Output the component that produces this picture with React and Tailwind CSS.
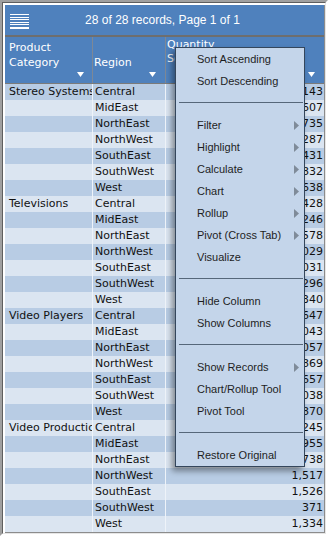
import React from "react";

const regions = ["Central", "MidEast", "NorthEast", "NorthWest", "SouthEast", "SouthWest", "West"];
const groups = [
  { name: "Stereo Systems", vals: ["1,143", "1,607", "1,735", "1,287", "1,431", "1,832", "1,638"] },
  { name: "Televisions", vals: ["1,428", "1,246", "1,578", "2,029", "2,031", "1,296", "1,340"] },
  { name: "Video Players", vals: ["1,647", "2,043", "2,057", "1,869", "1,657", "2,038", "1,870"] },
  { name: "Video Production", vals: ["1,245", "955", "738", "1,517", "1,526", "371", "1,334"] },
];

const rows = [];
groups.forEach((g) =>
  regions.forEach((r, i) => rows.push({ cat: i === 0 ? g.name : "", region: r, val: g.vals[i] }))
);

function Tri() {
  return (
    <svg width="7" height="5" viewBox="0 0 7 5" className="block">
      <polygon points="0,0 7,0 3.5,5" fill="#ffffff" />
    </svg>
  );
}

function Arrow() {
  return (
    <svg width="5" height="9" viewBox="0 0 5 9" className="block">
      <polygon points="0,0 5,4.5 0,9" fill="#7f8b99" />
    </svg>
  );
}

const menu = [
  { t: "Sort Ascending" },
  { t: "Sort Descending" },
  { sep: true },
  { t: "Filter", sub: true },
  { t: "Highlight", sub: true },
  { t: "Calculate", sub: true },
  { t: "Chart", sub: true },
  { t: "Rollup", sub: true },
  { t: "Pivot (Cross Tab)", sub: true },
  { t: "Visualize" },
  { sep: true },
  { t: "Hide Column" },
  { t: "Show Columns" },
  { sep: true },
  { t: "Show Records", sub: true },
  { t: "Chart/Rollup Tool" },
  { t: "Pivot Tool" },
  { sep: true },
  { t: "Restore Original" },
];

export default function App() {
  return (
    <div className="relative w-[328px] h-[536px] overflow-hidden bg-white">
      <div className="w-full h-full border-l-2 border-t-2 border-r-2 border-b-2 border-l-[#a0a0a0] border-t-[#a0a0a0] border-r-white border-b-white">
        <div className="w-full h-full border border-l-[#5f5f5f] border-t-[#5f5f5f] border-r-[#e6e6e6] border-b-[#e6e6e6] pl-[2px] pt-[2px] bg-white">
          <div className="w-[320px] h-[528px] border-r border-b border-[#8c8c8c] flex flex-col overflow-hidden">
            {/* top bar */}
            <div className="h-[32px] shrink-0 bg-[#4f81bd] border-b-2 border-[#6e6e6e] flex items-center relative">
              <div className="pl-[5px] pt-[1px]">
                <svg width="19" height="16" viewBox="0 0 19 16" className="block">
                  <rect x="0" y="1" width="19" height="1" fill="#fff" />
                  <rect x="0" y="4" width="19" height="1" fill="#fff" />
                  <rect x="0" y="6" width="19" height="1" fill="#fff" />
                  <rect x="0" y="9" width="19" height="1" fill="#fff" />
                  <rect x="0" y="11" width="19" height="1" fill="#fff" />
                  <rect x="0" y="14" width="19" height="2" fill="#fff" />
                </svg>
              </div>
              <div className="flex-1 text-center pr-[28px] font-['Liberation_Sans',Arial,sans-serif] text-[12px] text-white leading-none">
                28 of 28 records, Page 1 of 1
              </div>
            </div>
            {/* column header */}
            <div className="h-[47px] shrink-0 bg-[#4f81bd] border-b border-[#7a7a7a] flex font-['DejaVu_Sans',sans-serif] text-[11px] text-white">
              <div className="w-[88px] border-r border-[#7d8896] flex flex-col pl-[4px] pr-[8px] pt-[3px] pb-[6px]">
                <div className="leading-[15px]">Product<br />Category</div>
                <div className="mt-auto flex justify-end"><Tri /></div>
              </div>
              <div className="w-[73px] border-r border-[#7d8896] flex flex-col pl-[1px] pr-[9px] pt-[18px] pb-[6px]">
                <div className="leading-[15px]">Region</div>
                <div className="mt-auto flex justify-end"><Tri /></div>
              </div>
              <div className="flex-1 flex flex-col pl-[1px] pr-[9px] pt-[1px] pb-[6px]">
                <div className="leading-[14px]">Quantity<br />Sold</div>
                <div className="mt-auto flex justify-end"><Tri /></div>
              </div>
            </div>
            {/* data rows */}
            <div className="flex flex-col font-['DejaVu_Sans',sans-serif] text-[11px] text-[#111]">
              {rows.map((r, i) => (
                <div
                  key={i}
                  className={`h-[16px] flex leading-[16px] ${i % 2 === 0 ? "bg-[#b8cce4]" : "bg-[#dbe5f1]"}`}
                >
                  <div className="w-[88px] border-r border-[#eef3f9] pl-[4px] whitespace-nowrap overflow-hidden">{r.cat}</div>
                  <div className="w-[73px] border-r border-[#eef3f9] pl-[2px] whitespace-nowrap overflow-hidden">{r.region}</div>
                  <div className="flex-1 text-right pr-[1px]">{r.val}</div>
                </div>
              ))}
            </div>
          </div>
        </div>
      </div>

      {/* context menu */}
      <div className="absolute left-[175px] top-[47px] w-[130px] h-[420px] bg-[#c4d5ea] border border-[#34465c] shadow-[-3px_4px_6px_rgba(0,0,0,0.4)] flex flex-col font-['Liberation_Sans',Arial,sans-serif] text-[11px] text-[#1e1e1e]">
        {menu.map((m, i) =>
          m.sep ? (
            <div key={i} className="h-[22px] shrink-0 pt-[10px] pl-[3px] pr-[1px]">
              <div className="h-px bg-[#56677a]" />
            </div>
          ) : (
            <div key={i} className="h-[22px] shrink-0 flex items-center justify-between pl-[21px] pr-[5px]">
              <span>{m.t}</span>
              {m.sub ? <Arrow /> : null}
            </div>
          )
        )}
      </div>
    </div>
  );
}
